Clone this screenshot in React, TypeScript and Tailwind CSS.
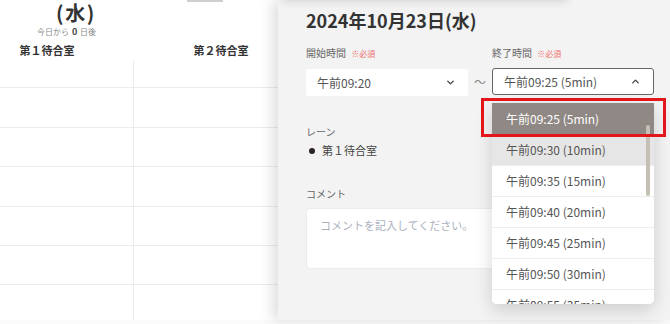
import { ChevronDown, ChevronUp } from "lucide-react";

const rows = [28, 40, 39, 40, 39, 39, 40];

const options = [
  "午前09:25 (5min)",
  "午前09:30 (10min)",
  "午前09:35 (15min)",
  "午前09:40 (20min)",
  "午前09:45 (25min)",
  "午前09:50 (30min)",
  "午前09:55 (35min)",
];

const App = () => {
  return (
    <div
      className="w-[670px] h-[324px] bg-[#fafafa] overflow-hidden"
      style={{ fontFamily: '"Noto Sans CJK JP", "Noto Sans", sans-serif' }}
    >
      <div className="flex h-[320px]">
        {/* Schedule (left) */}
        <div className="relative w-[278px] shrink-0 bg-white overflow-hidden">
          <div className="absolute left-[187px] top-0 w-[36px] h-[2px] bg-[#cfcfcf]" />
          <div className="ml-[-40px] w-[348px]">
            <div className="w-[270px] flex flex-col items-end pr-[134px] h-[41px]">
              <div className="text-[20px] font-bold text-[#333] leading-[20px] mt-[3px] tracking-[0.08em]">(水)</div>
              <div className="text-[8px] text-[#888] mt-[3px] leading-[12px] whitespace-nowrap">
                今日から <span className="font-bold text-[#444] text-[9px] mx-[1px]">0</span> 日後
              </div>
            </div>
            <div className="flex h-[19px] items-center">
              <div className="w-[174px] text-center text-[11px] font-bold text-[#333] leading-none">第１待合室</div>
              <div className="w-[174px] text-center text-[11px] font-bold text-[#333] leading-none">第２待合室</div>
            </div>
            {rows.map((h, i) => (
              <div key={i} className="flex border-b-[1.5px] border-[#ececec]" style={{ height: h }}>
                <div className="w-[174px] border-r border-[#ececec]" />
                <div className="w-[174px]" />
              </div>
            ))}
          </div>
        </div>

        {/* Reservation drawer (right) */}
        <div className="relative flex-1 bg-[#f3f3f3] pl-[28px] shadow-[-6px_0_12px_rgba(0,0,0,0.12)]">
          <div className="absolute left-[4px] top-[-16px] w-[286px] h-[16px] bg-white shadow-[0_1px_10px_rgba(0,0,0,0.14)]" />
          <h1 className="text-[18px] font-bold text-[#333] leading-none pt-[11px]">2024年10月23日(水)</h1>

          <div className="flex mt-[19px] items-start">
            <div className="w-[162px]">
              <div className="text-[10px] text-[#666] leading-none h-[12px]">
                開始時間 <span className="text-[8px] text-[#f06a6a] ml-[3px]">※必須</span>
              </div>
              <div className="mt-[9px] h-[27px] bg-white rounded-[3px] flex items-center justify-between pl-[11px] pr-[12px] text-[12px] text-[#555]">
                <span>午前09:20</span>
                <ChevronDown size={11} strokeWidth={3} className="text-[#444]" />
              </div>
            </div>
            <div className="w-[24px] text-center text-[12px] text-[#888] mt-[25px]">〜</div>
            <div className="relative w-[162px]">
              <div className="text-[10px] text-[#666] leading-none h-[12px]">
                終了時間 <span className="text-[8px] text-[#f06a6a] ml-[3px]">※必須</span>
              </div>
              <div className="mt-[8px] h-[27px] bg-white rounded-[3px] border border-[#666] flex items-center justify-between pl-[11px] pr-[12px] text-[12px] text-[#555]">
                <span>午前09:25 (5min)</span>
                <ChevronUp size={11} strokeWidth={3} className="text-[#444]" />
              </div>

              {/* Open option list */}
              <div className="absolute z-10 left-0 top-[55px] w-[162px] h-[201px] bg-white rounded-b-[5px] overflow-hidden shadow-[0_6px_18px_rgba(0,0,0,0.16)]">
                {options.map((o, i) => (
                  <div
                    key={o}
                    className={
                      i === 0
                        ? "h-[31px] flex items-center pl-[14px] text-[12px] bg-[#8f8884] text-white"
                        : i === 1
                        ? "h-[31px] flex items-center pl-[14px] text-[12px] bg-[#e6e6e6] text-[#555]"
                        : "h-[31px] flex items-center pl-[14px] text-[12px] bg-white text-[#555] border-t border-[#eeeeee]"
                    }
                  >
                    {o}
                  </div>
                ))}
                <div className="absolute right-[4px] top-[22px] w-[4px] h-[71px] rounded-full bg-[#c4c0b3]" />
              </div>
              <div className="absolute z-20 left-[-11px] top-[50px] w-[185px] h-[39px] border-[3px] border-[#e3161c]" />
            </div>
          </div>

          <div className="text-[10px] text-[#666] leading-none mt-[31px]">レーン</div>
          <div className="flex items-center mt-[8px] text-[11px] text-[#444] leading-none">
            <span className="w-[6px] h-[6px] rounded-full bg-[#2b2222] ml-[3px] mr-[7px]" />
            第１待合室
          </div>

          <div className="text-[10px] text-[#666] leading-none mt-[33px]">コメント</div>
          <div className="mt-[9px] w-[347px] h-[61px] bg-white rounded-[4px] border border-[#ececec] pl-[13px] pt-[8px] text-[11px] text-[#aab0bc]">
            コメントを記入してください。
          </div>
        </div>
      </div>
    </div>
  );
};

export default App;
